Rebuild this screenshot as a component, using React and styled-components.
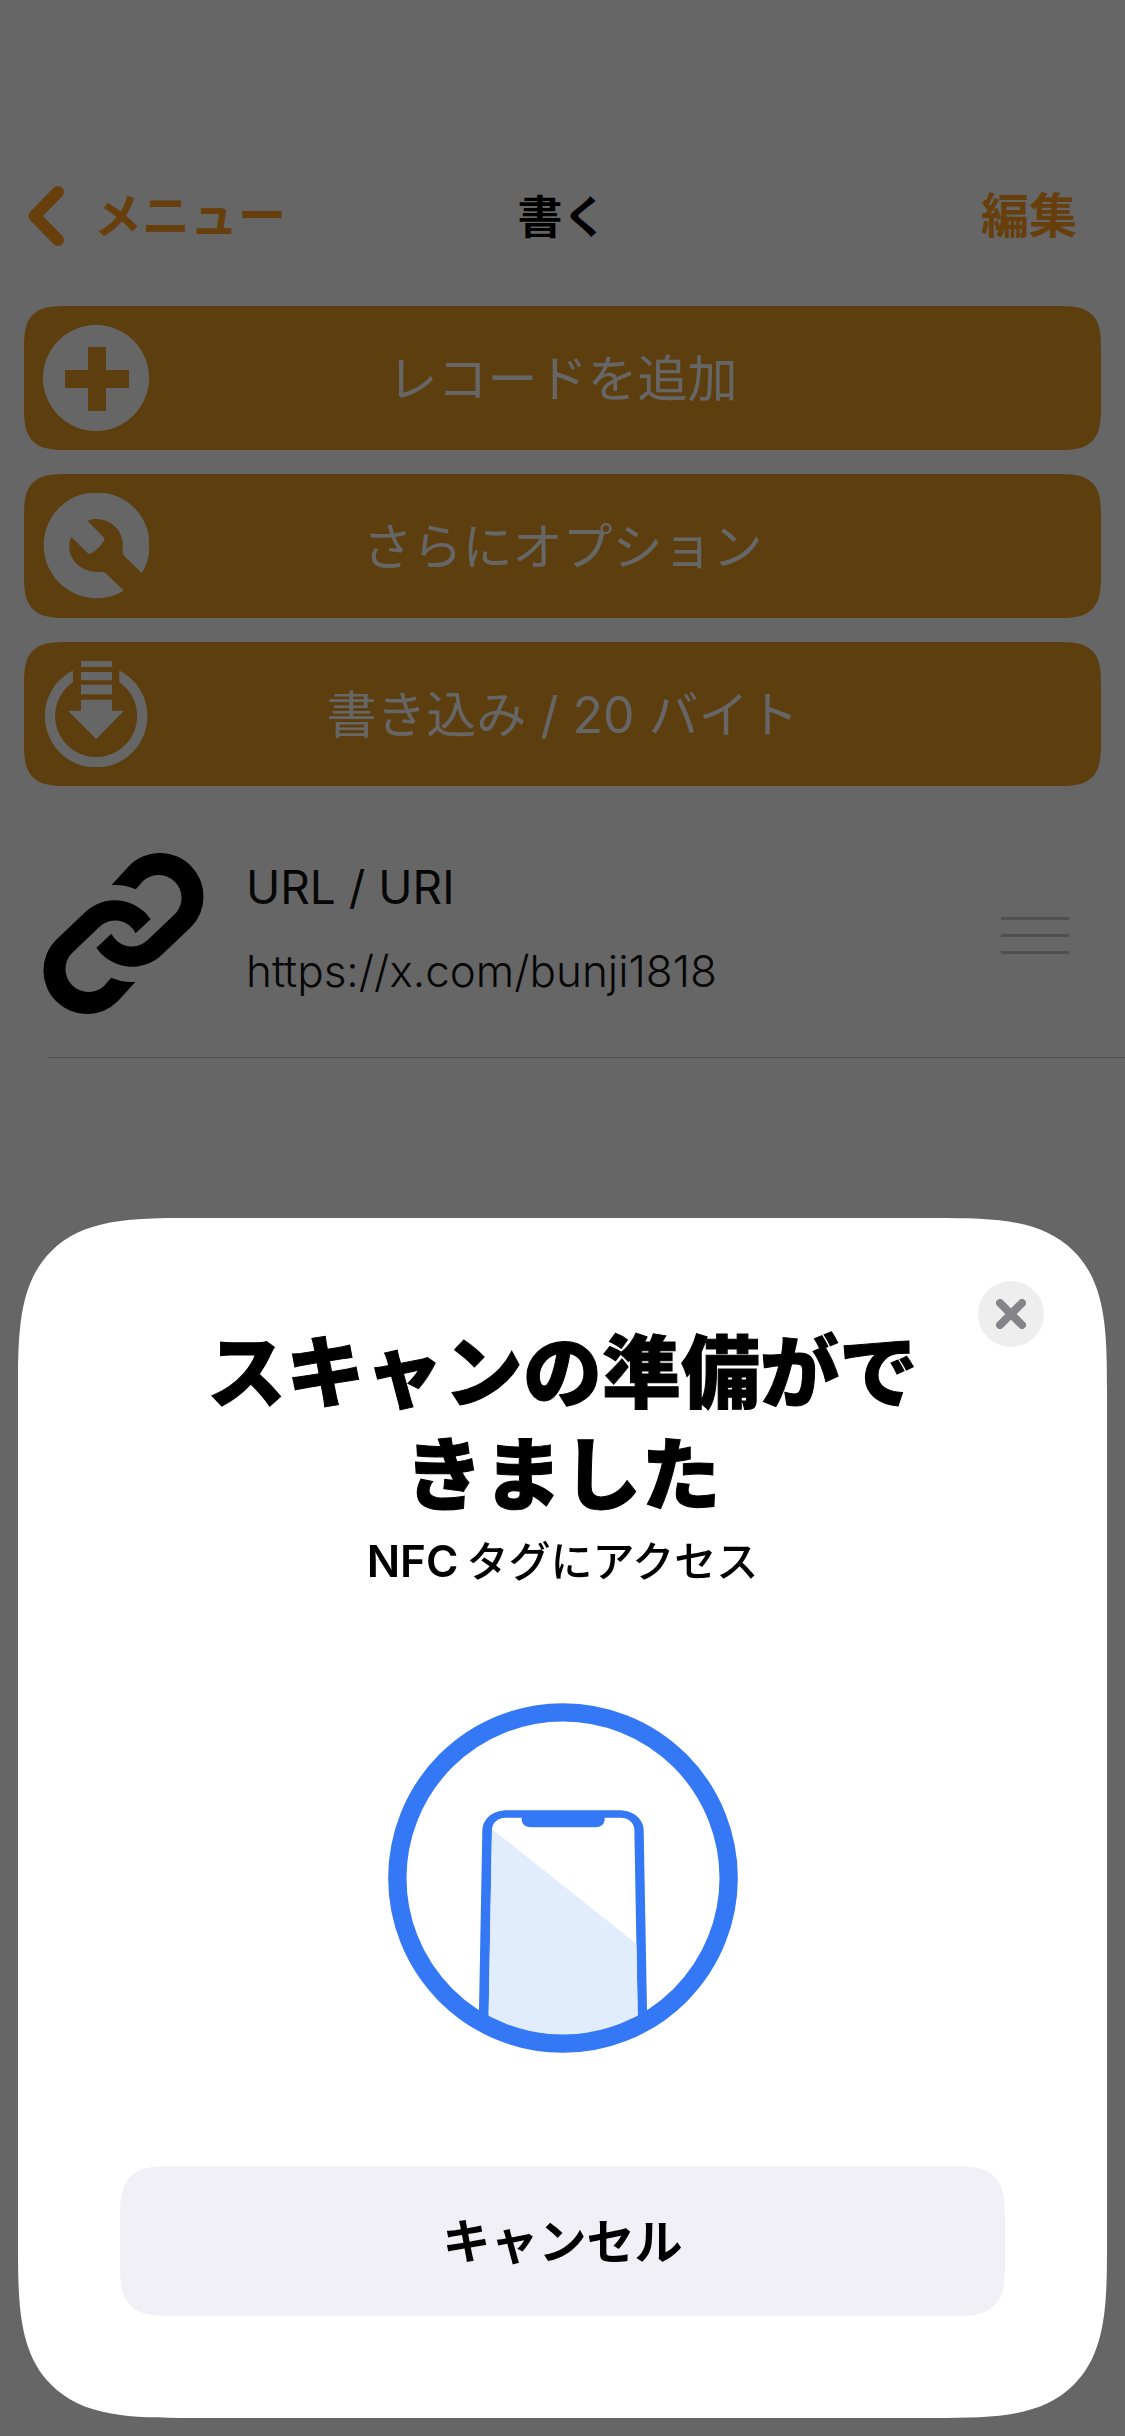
import React, { useState } from 'react';
import styled, { createGlobalStyle } from 'styled-components';

const GlobalStyle = createGlobalStyle`
  * {
    box-sizing: border-box;
  }

  body {
    margin: 0;
    background-color: white;
    font-family: Inter, 'Noto Sans CJK JP', sans-serif;
  }

  button {
    margin: 0;
    padding: 0;
    border: none;
    background: none;
    font-family: inherit;
    cursor: pointer;
  }

  svg {
    display: block;
    flex-shrink: 0;
  }
`;

const Page = styled.div`
  min-height: 100vh;
  padding-top: 150px;
`;

const NavBar = styled.header`
  display: grid;
  grid-template-columns: 1fr auto 1fr;
  align-items: center;
  height: 132px;
  padding: 0 28px;
`;

const NavButton = styled.button`
  display: flex;
  align-items: center;
  gap: 30px;
  justify-self: ${props => props.$side};
  padding-right: ${props => props.$side === 'end' ? '20px' : '0'};
  color: #ff9d22;
  font-size: 48px;
  font-weight: 600;
  line-height: 60px;
`;

const NavTitle = styled.h1`
  margin: 0;
  padding-top: 4px;
  font-size: 45px;
  font-weight: 600;
  line-height: 60px;
`;

const Actions = styled.div`
  display: flex;
  flex-direction: column;
  gap: 24px;
  padding: 24px;
`;

const ActionButton = styled.button`
  display: grid;
  grid-template-columns: 106px 1fr 106px;
  align-items: center;
  height: 144px;
  padding: 0 19px;
  border-radius: 32px;
  background-color: #e69b26;
  color: white;
  font-size: 50px;
  line-height: 60px;

  @supports (corner-shape: superellipse(1.7)) {
    border-radius: 46px;
    corner-shape: superellipse(1.7);
  }
`;

const ActionLabel = styled.span`
  padding-top: 2px;
`;

const RecordList = styled.ul`
  margin: 0;
  padding: 0 0 0 48px;
  list-style: none;
`;

const Record = styled.li`
  display: flex;
  align-items: center;
  height: 247px;
  margin-left: -5px;
  padding-right: 56px;
`;

const RecordText = styled.div`
  flex-grow: 1;
  padding: 0 0 10px 42px;
  color: #0f0f0f;
  line-height: 84px;
`;

const RecordType = styled.div`
  font-size: 46px;
`;

const RecordValue = styled.div`
  font-size: 44px;
  font-weight: 300;
`;

const Separator = styled.li`
  height: 1px;
  background-color: #c8c7cc;
`;

const DragHandle = styled.button`
  display: flex;
  flex-direction: column;
  gap: 14px;
  width: 68px;
  padding-top: 3px;
`;

const DragLine = styled.span`
  height: 3px;
  background-color: #c7c7cc;
`;

const Backdrop = styled.div`
  position: fixed;
  inset: 0;
  display: flex;
  align-items: flex-end;
  padding: 18px;
  background-color: rgba(0, 0, 0, 0.6);
`;

const Sheet = styled.section`
  position: relative;
  display: flex;
  flex-direction: column;
  align-items: center;
  width: 100%;
  padding: 104px 102px 102px;
  border-radius: 120px;
  background-color: white;
  text-align: center;

  @supports (corner-shape: superellipse(1.7)) {
    border-radius: 173px;
    corner-shape: superellipse(1.7);
  }
`;

const SheetTitle = styled.h2`
  max-width: 740px;
  margin: 0;
  font-size: 79px;
  font-weight: 900;
  line-height: 102px;
  -webkit-text-stroke: 1px black;
`;

const SheetText = styled.p`
  margin: 6px 0 111px;
  font-size: 42px;
  font-weight: 500;
  line-height: 60px;
`;

const Latin = styled.span`
  margin-right: 8px;
  font-size: 44px;
  font-weight: 600;
  line-height: 44px;
`;

const CloseButton = styled.button`
  position: absolute;
  top: 63px;
  right: 63px;
  display: flex;
  align-items: center;
  justify-content: center;
  width: 66px;
  height: 66px;
  border-radius: 50%;
  background-color: #eeeeef;
`;

const CancelButton = styled.button`
  align-self: stretch;
  height: 150px;
  margin-top: 113px;
  padding-top: 2px;
  border-radius: 36px;
  background-color: #f1f0f6;
  color: black;
  font-size: 48px;
  font-weight: 600;
  line-height: 60px;

  @supports (corner-shape: superellipse(1.7)) {
    border-radius: 55px;
    corner-shape: superellipse(1.7);
  }
`;

const BackIcon = () => (
    <svg width="36" height="60" viewBox="0 0 36 60" fill="none" aria-hidden="true">
        <path d="M30 6 L6.5 30 L30 54" stroke="currentColor" strokeWidth="12" strokeLinecap="round" strokeLinejoin="round" />
    </svg>
);

const PlusIcon = () => (
    <svg width="106" height="106" viewBox="0 0 106 106" fill="currentColor" aria-hidden="true">
        <path fillRule="evenodd" d="M53 0 A53 53 0 1 1 53 106 A53 53 0 1 1 53 0 Z M45 22 V45 H22 V63 H45 V86 H63 V63 H86 V45 H63 V22 Z" />
    </svg>
);

const WrenchIcon = () => (
    <svg width="106" height="106" viewBox="0 0 106 106" fill="currentColor" aria-hidden="true">
        <path d="M98.8 80 A53 53 0 1 0 80.9 97.7 L64.9 82.3 C63 80 61 79 58.8 79 L50.6 78.7 C36 77 26 66 26.3 53 C26.3 50 27 47 28.4 44 L44.9 60.3 Q46 61.2 47.5 60.6 C53 58 58 53 61.3 47 Q62 45.5 60.6 44.3 L44.5 27.7 C47 26.6 50 26 53.4 26 C68 26 80 38 79.9 52 L79.5 57 C79.5 60 80.3 62 82 63.7 Z" />
    </svg>
);

const WriteIcon = () => (
    <svg width="106" height="106" viewBox="0 0 106 106" fill="currentColor" aria-hidden="true">
        <path d="M29.9 9.4 A51.3 51.3 0 1 0 76.3 9.4 V21.3 A41 41 0 1 1 29.9 21.3 Z" />
        <path d="M38 0 H69 V6 H38 Z M38 11 H69 V19.3 H38 Z M38 23.7 H69 V33.3 H38 Z" />
        <path d="M38 38.7 H69 V49.7 H81 L53.2 78 L25 49.7 H38 Z" />
    </svg>
);

const linkHalf = 'M68.4 32.2 L86.2 12.7 A43.5 43.5 0 0 1 147.8 74.3 L119.2 101.4 A43 43 0 0 1 53.4 94.7 L68.4 80.7 A22.5 22.5 0 0 0 104.7 86.9 L133.2 59.7 A23 23 0 0 0 100.8 27.3 L92.7 36.3 C85 33 77 31.5 68.4 32.2 Z';

const LinkIcon = () => (
    <svg width="161" height="161" viewBox="0 0 161 161" aria-hidden="true">
        <path d={linkHalf} />
        <path d={linkHalf} transform="rotate(180 80.5 80.5)" />
    </svg>
);

const CloseIcon = () => (
    <svg width="30" height="30" viewBox="0 0 30 30" aria-hidden="true">
        <path d="M4 4 L26 26 M26 4 L4 26" stroke="#848489" strokeWidth="8" strokeLinecap="round" />
    </svg>
);

const PhoneScan = () => (
    <svg width="350" height="350" viewBox="84 68 1050 1050" aria-hidden="true">
        <clipPath id="ring">
            <circle cx="609" cy="593" r="497" />
        </clipPath>
        <g clipPath="url(#ring)">
            <path fill="#3478f6" d="M357 1118 L357 990 L367 450 C368 415 400 390 440 390 H778 C818 390 850 415 851 450 L861 990 V1118 Z" />
            <path fill="white" d="M386 1118 L386 1000 L396 446 C398 426 414 412 437 412 H485 V417 C485 432 497 441 512 441 H706 C722 441 734 432 734 417 V412 H781 C805 412 821 426 823 446 L833 1000 V1118 Z" />
            <path fill="#e1edfc" d="M386 1118 L386 1000 L396 446 L829 790 L833 1000 V1118 Z" />
        </g>
        <circle cx="609" cy="593" r="497" fill="none" stroke="#3478f6" strokeWidth="55" />
    </svg>
);

const actions = [
    { label: 'レコードを追加', Icon: PlusIcon },
    { label: 'さらにオプション', Icon: WrenchIcon },
    { label: '書き込み / 20 バイト', Icon: WriteIcon },
];

const App = () => {
    const [scanning, setScanning] = useState(true);

    return (
        <>
            <GlobalStyle />
            <Page>
                <NavBar>
                    <NavButton $side="start">
                        <BackIcon />
                        メニュー
                    </NavButton>
                    <NavTitle>書く</NavTitle>
                    <NavButton $side="end">編集</NavButton>
                </NavBar>
                <Actions>
                    {actions.map(({ label, Icon }) => (
                        <ActionButton key={label} onClick={() => setScanning(true)}>
                            <Icon />
                            <ActionLabel>{label}</ActionLabel>
                        </ActionButton>
                    ))}
                </Actions>
                <RecordList>
                    <Record>
                        <LinkIcon />
                        <RecordText>
                            <RecordType>URL / URI</RecordType>
                            <RecordValue>https://x.com/bunji1818</RecordValue>
                        </RecordText>
                        <DragHandle aria-label="並べ替え">
                            <DragLine />
                            <DragLine />
                            <DragLine />
                        </DragHandle>
                    </Record>
                    <Separator role="separator" />
                </RecordList>
            </Page>
            {scanning && (
                <Backdrop>
                    <Sheet role="dialog" aria-modal="true" aria-labelledby="scan-title">
                        <CloseButton aria-label="閉じる" onClick={() => setScanning(false)}>
                            <CloseIcon />
                        </CloseButton>
                        <SheetTitle id="scan-title">スキャンの準備ができました</SheetTitle>
                        <SheetText><Latin>NFC</Latin>タグにアクセス</SheetText>
                        <PhoneScan />
                        <CancelButton onClick={() => setScanning(false)}>キャンセル</CancelButton>
                    </Sheet>
                </Backdrop>
            )}
        </>
    );
};

export default App;
